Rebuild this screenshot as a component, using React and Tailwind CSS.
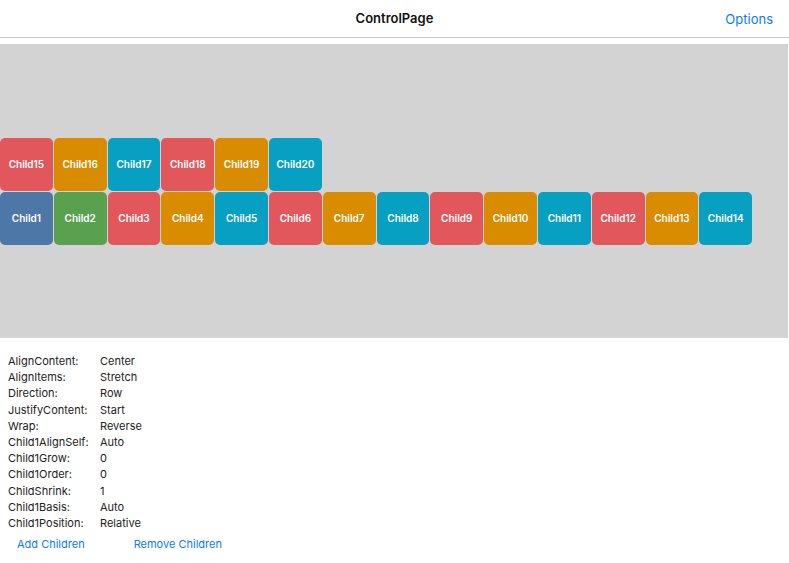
const colors = {
  red: "bg-[#e2575c]",
  orange: "bg-[#d98c00]",
  teal: "bg-[#08a0c2]",
  blue: "bg-[#4d77a6]",
  green: "bg-[#59a14f]",
};

const topRow = [
  { n: 15, c: colors.red },
  { n: 16, c: colors.orange },
  { n: 17, c: colors.teal },
  { n: 18, c: colors.red },
  { n: 19, c: colors.orange },
  { n: 20, c: colors.teal },
];

const bottomRow = [
  { n: 1, c: colors.blue },
  { n: 2, c: colors.green },
  { n: 3, c: colors.red },
  { n: 4, c: colors.orange },
  { n: 5, c: colors.teal },
  { n: 6, c: colors.red },
  { n: 7, c: colors.orange },
  { n: 8, c: colors.teal },
  { n: 9, c: colors.red },
  { n: 10, c: colors.orange },
  { n: 11, c: colors.teal },
  { n: 12, c: colors.red },
  { n: 13, c: colors.orange },
  { n: 14, c: colors.teal },
];

const props = [
  ["AlignContent:", "Center"],
  ["AlignItems:", "Stretch"],
  ["Direction:", "Row"],
  ["JustifyContent:", "Start"],
  ["Wrap:", "Reverse"],
  ["Child1AlignSelf:", "Auto"],
  ["Child1Grow:", "0"],
  ["Child1Order:", "0"],
  ["ChildShrink:", "1"],
  ["Child1Basis:", "Auto"],
  ["Child1Position:", "Relative"],
];

function Box({ n, c }) {
  return (
    <div className={`w-[52.8px] h-[53px] rounded-[5px] flex items-center justify-center text-white text-[10px] font-semibold ${c}`}>
      Child{n}
    </div>
  );
}

export default function App() {
  return (
    <div className="w-[789px] h-[563px] bg-white flex flex-col overflow-hidden rounded-bl-[10px] font-['Inter','Liberation_Sans',sans-serif]">
      {/* Nav bar */}
      <div className="h-[38px] shrink-0 border-b border-[#c6c6c6] relative flex items-center justify-center">
        <span className="text-[13px] font-semibold text-[#111]">ControlPage</span>
        <span className="absolute right-[16px] top-[10px] text-[13px] text-[#0a7aff]">Options</span>
      </div>

      {/* Flex playground */}
      <div className="mt-[6px] h-[294px] w-[788px] shrink-0 bg-[#d3d3d3] flex flex-col justify-center gap-[1px]">
        <div className="flex gap-[1px]">
          {topRow.map((b) => (
            <Box key={b.n} {...b} />
          ))}
        </div>
        <div className="flex gap-[1px]">
          {bottomRow.map((b) => (
            <Box key={b.n} {...b} />
          ))}
        </div>
      </div>

      {/* Properties */}
      <div className="pl-[8px] pt-[15px] text-[11px] text-[#222] leading-[16.2px]">
        {props.map(([k, v]) => (
          <div key={k} className="flex">
            <span className="w-[92px]">{k}</span>
            <span>{v}</span>
          </div>
        ))}
      </div>
      <div className="flex text-[11px] text-[#0a7aff] pt-[5px]">
        <span className="ml-[17px]">Add Children</span>
        <span className="ml-[49px]">Remove Children</span>
      </div>
    </div>
  );
}
